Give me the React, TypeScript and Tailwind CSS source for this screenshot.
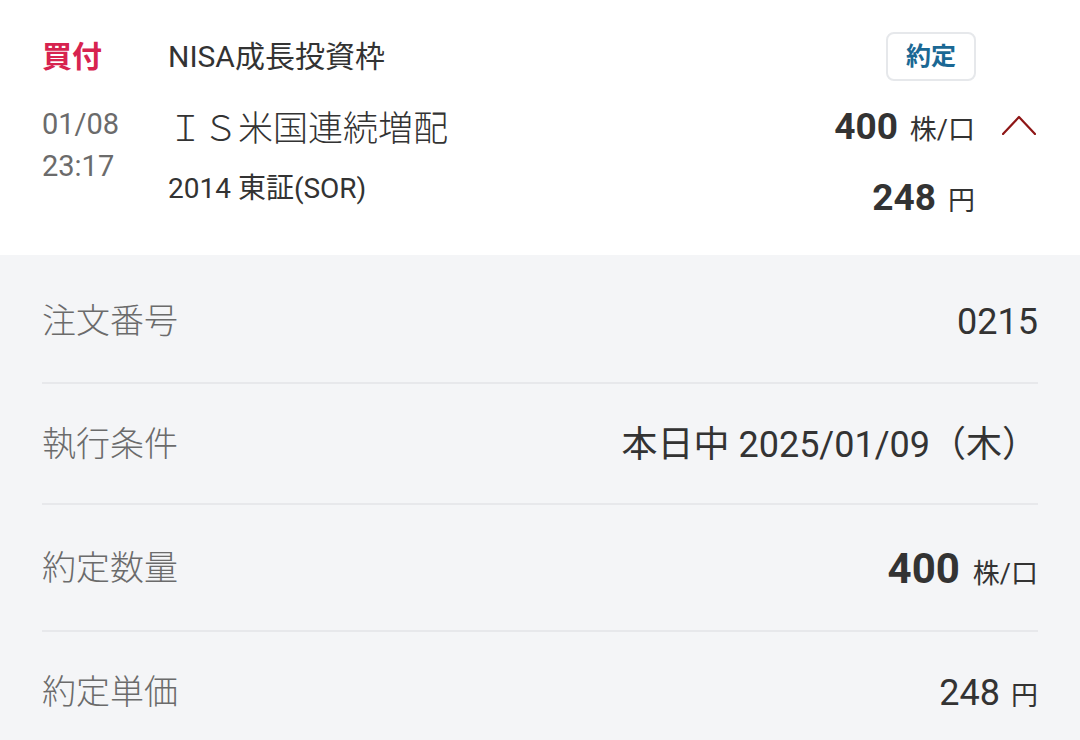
const font = { fontFamily: "Roboto, 'Noto Sans CJK JP', sans-serif" };

type Row = { label: string; value: React.ReactNode; h: string };

function ChevronUp() {
  return (
    <svg width="34" height="20" viewBox="0 0 34 20" fill="none">
      <path d="M1 19 L17 2 L33 19" stroke="#8e1616" strokeWidth="2.2" strokeLinecap="round" strokeLinejoin="round" />
    </svg>
  );
}

export default function App() {
  const rows: Row[] = [
    { label: "注文番号", value: <span className="text-[36px]">0215</span>, h: "h-[129px] pt-[6px]" },
    {
      label: "執行条件",
      value: <span className="text-[36px]">本日中 2025/01/09（木）</span>,
      h: "h-[121px] pt-[2px]",
    },
    {
      label: "約定数量",
      value: (
        <span className="flex items-baseline gap-[13px]">
          <span className="text-[42px] font-bold">400</span>
          <span className="text-[27px]">株/口</span>
        </span>
      ),
      h: "h-[127px] pt-[2px]",
    },
    {
      label: "約定単価",
      value: (
        <span className="flex items-baseline gap-[11px]">
          <span className="text-[36px]">248</span>
          <span className="text-[27px]">円</span>
        </span>
      ),
      h: "h-[121px]",
    },
  ];

  return (
    <div style={font} className="w-[1080px] h-[740px] overflow-hidden bg-[#f4f5f7] text-[#333333]">
      {/* header card */}
      <div className="bg-white h-[255px] px-[42px] pt-[32px]">
        <div className="flex items-center h-[49px]">
          <div className="w-[126px] text-[30px] font-bold text-[#d7234f] leading-none">買付</div>
          <div className="flex-1 text-[30px] leading-none">NISA成長投資枠</div>
          <div className="h-[49px] w-[90px] flex items-center justify-center rounded-[8px] border-2 border-[#e6e8eb] bg-white text-[25px] font-bold text-[#1b6894]">
            約定
          </div>
          <div className="w-[62px]" />
        </div>

        <div className="flex mt-[22px]">
          <div className="w-[126px] text-[29px] leading-[42px] text-[#6b6b6b]">
            <div>01/08</div>
            <div>23:17</div>
          </div>
          <div className="flex-1 pt-[5px]">
            <div className="text-[35px] font-light leading-[44px]">ＩＳ米国連続増配</div>
            <div className="text-[28px] leading-[36px] mt-[19px]">2014 東証(SOR)</div>
          </div>
          <div className="flex flex-col items-end pt-[2px]">
            <div className="flex items-baseline gap-[12px] h-[44px] leading-[44px]">
              <span className="text-[37px] font-bold">400</span>
              <span className="text-[27px]">株/口</span>
            </div>
            <div className="flex items-baseline gap-[12px] h-[44px] leading-[44px] mt-[27px]">
              <span className="text-[37px] font-bold">248</span>
              <span className="text-[27px]">円</span>
            </div>
          </div>
          <div className="ml-[27px] pt-[12px] w-[36px]">
            <ChevronUp />
          </div>
        </div>
      </div>

      {/* detail rows */}
      <div className="px-[42px]">
        {rows.map((r, i) => (
          <div
            key={r.label}
            className={`flex items-center justify-between ${r.h} ${
              i < rows.length - 1 ? "border-b-2 border-[#e7e8eb]" : ""
            }`}
          >
            <span className="text-[34px] font-light text-[#6b6b6b]">{r.label}</span>
            {r.value}
          </div>
        ))}
      </div>
    </div>
  );
}
